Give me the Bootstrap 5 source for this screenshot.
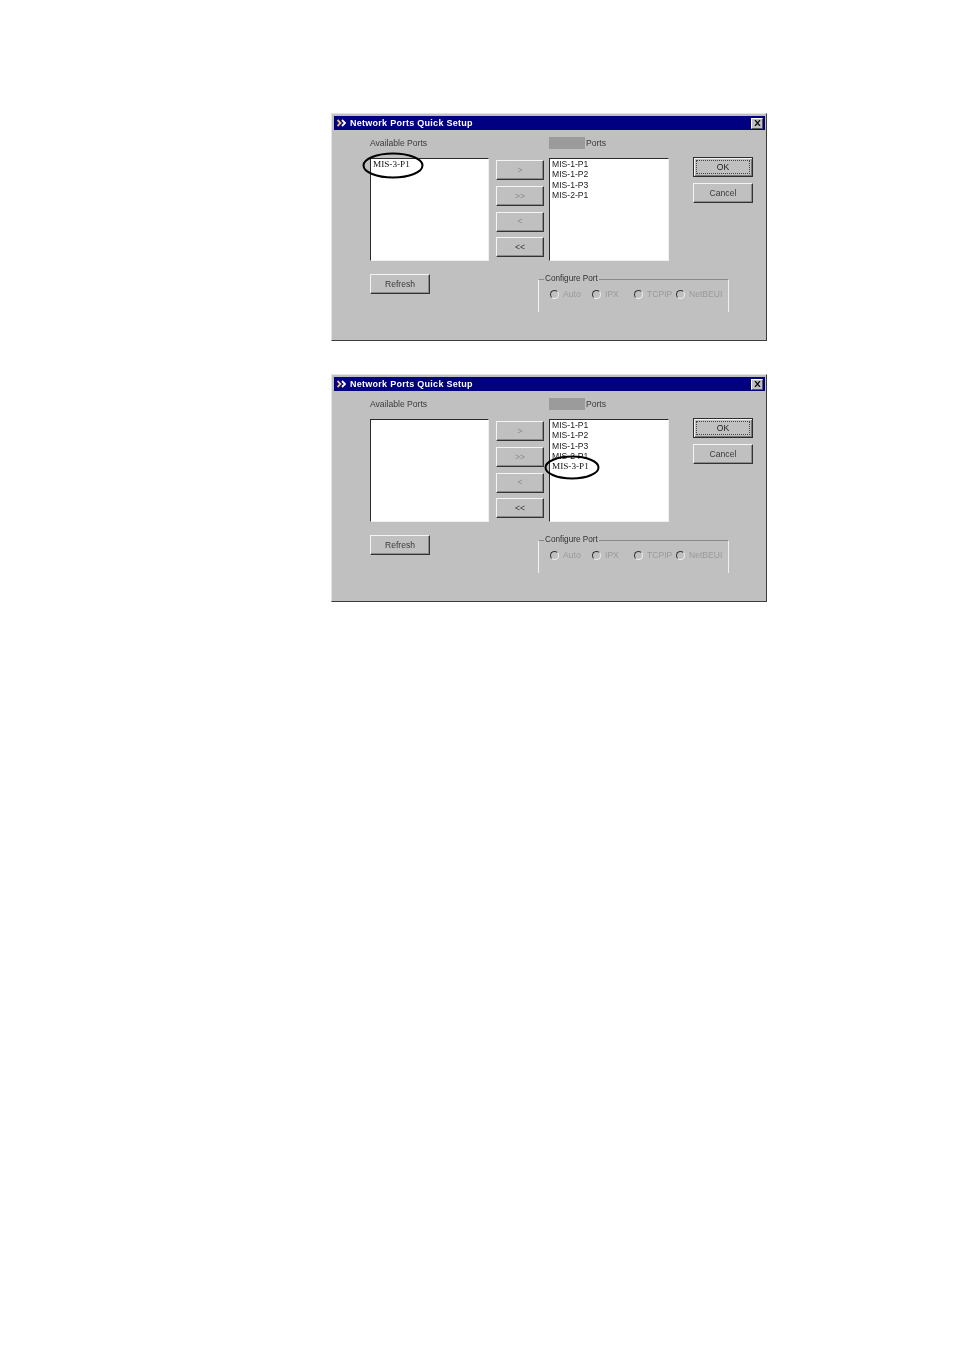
<!DOCTYPE html>
<html lang="en">
<head>
<meta charset="utf-8">
<title>Network Ports Quick Setup</title>
<link href="https://cdn.jsdelivr.net/npm/bootstrap@5.3.0/dist/css/bootstrap.min.css" rel="stylesheet">
<style>
body{background:#fff;font-family:"Liberation Sans",Arial,sans-serif;}
.sheet{padding:113px 0 0 331px;gap:33px;}
.dlg{position:relative;width:436px;height:228px;background:#c0c0c0;border:1px solid;border-color:#e4e4e4 #3c3c3c #3c3c3c #e4e4e4;padding:2px 1px 0 2px;font-size:8.6px;color:#3a3a3a;line-height:10.3px;filter:blur(.3px);}
.ttl{height:14px;background:#000080;color:#fff;font-weight:700;font-size:9px;letter-spacing:.27px;padding:0 2px 0 2px;}
.ttl-ico{width:13px;height:12px;margin-right:1px;}
.cls{width:12px;height:11px;background:#c0c0c0;border:1px solid;border-color:#fff #555 #555 #fff;}
.dlg-body{padding:7px 0 0 36px;}
.lbl-row{height:12px;margin-bottom:9px;}
.lbl-l{width:179px;}
.grey{width:36px;height:12px;background:#9b9b9b;margin-right:1px;}
.main-row{height:103px;}
.lbox{width:119px;height:103px;background:#fff;border:1px solid;border-color:#2a2a2a #f0f0f0 #f0f0f0 #2a2a2a;padding:0 0 0 2px;color:#222;}
.lbox.r{width:120px;}
.it-s{font-family:"Liberation Serif","Times New Roman",serif;font-size:9.2px;color:#111;}
.arrows{width:48px;margin:2px 5px 0 7px;gap:5.8px;}
.actions{width:60px;margin:-1px 0 0 24px;gap:6px;}
.wbtn{height:20px;width:100%;padding:0;border-radius:0;background:#c0c0c0;color:#3a3a3a;font-size:8.6px;line-height:1;border:1px solid;border-color:#f4f4f4 #333 #333 #f4f4f4;box-shadow:inset -1px -1px 0 #8a8a8a;}
.wbtn:hover{background:#c0c0c0;color:#3a3a3a;border-color:#f4f4f4 #333 #333 #f4f4f4;}
.wbtn.dim{color:#8c8c8c;}
.wbtn.def{border:1px solid #2c2c2c;box-shadow:inset 1px 1px 0 #f4f4f4,inset -1px -1px 0 #777;position:relative;color:#222;}
.wbtn.def::after{content:"";position:absolute;inset:2px;border:1px dotted #444;}
.low-row{margin-top:13px;}
.w60{width:60px;}
.grp{width:191px;height:38px;margin:0 0 0 108px;padding:0;border:1px solid;border-bottom:0;border-color:#f0f0f0 #f0f0f0 transparent #f0f0f0;border-top-color:#8a8a8a;border-left-color:#f4f4f4;min-width:0;}
.grp legend{float:none;width:auto;margin:0 0 0 5px;padding:0 1px;font-size:8.2px;line-height:10px;color:#333;}
.rad-row{margin:5px 0 0 11px;color:#999;}
.rad-c{width:42px;gap:4px;white-space:nowrap;}
.rad{width:9px;height:9px;flex:none;border-radius:50%;background:#c0c0c0;border:1px solid;border-color:#333 #eee #eee #333;}
.mark-o{position:absolute;pointer-events:none;}
.o1{left:30px;top:38px;width:62px;height:27px;}
.o2{left:212px;top:80px;width:56px;height:25px;}
</style>
</head>
<body>
<div class="sheet d-flex flex-column">

<section class="dlg">
  <div class="ttl d-flex align-items-center">
    <svg class="ttl-ico" viewBox="0 0 13 12"><path d="M1.5 3l3 3-3 3" fill="none" stroke="#f0c080" stroke-width="1.8"/><path d="M6 3l3 3-3 3" fill="none" stroke="#fff" stroke-width="1.8"/></svg>
    <span class="flex-grow-1">Network Ports Quick Setup</span>
    <span class="cls d-flex align-items-center justify-content-center"><svg width="7" height="6" viewBox="0 0 7 6"><path d="M1 0l5 6M6 0L1 6" stroke="#111" stroke-width="1.3"/></svg></span>
  </div>
  <div class="dlg-body">
    <div class="lbl-row d-flex align-items-center"><span class="lbl-l">Available Ports</span><span class="grey"></span><span>Ports</span></div>
    <div class="main-row d-flex">
      <div class="lbox"><div class="it-s">MIS-3-P1</div></div>
      <div class="arrows d-flex flex-column">
        <button class="btn wbtn dim">&gt;</button><button class="btn wbtn dim">&gt;&gt;</button><button class="btn wbtn dim">&lt;</button><button class="btn wbtn">&lt;&lt;</button>
      </div>
      <div class="lbox r"><div>MIS-1-P1</div><div>MIS-1-P2</div><div>MIS-1-P3</div><div>MIS-2-P1</div></div>
      <div class="actions d-flex flex-column">
        <button class="btn wbtn def">OK</button><button class="btn wbtn">Cancel</button>
      </div>
    </div>
    <div class="low-row d-flex align-items-start">
      <button class="btn wbtn w60">Refresh</button>
      <fieldset class="grp"><legend>Configure Port</legend>
        <div class="rad-row d-flex">
          <span class="rad-c d-flex align-items-center"><i class="rad"></i>Auto</span>
          <span class="rad-c d-flex align-items-center"><i class="rad"></i>IPX</span>
          <span class="rad-c d-flex align-items-center"><i class="rad"></i>TCPIP</span>
          <span class="rad-c d-flex align-items-center"><i class="rad"></i>NetBEUI</span>
        </div>
      </fieldset>
    </div>
  </div>
  <svg class="mark-o o1" viewBox="0 0 62 27"><ellipse cx="31" cy="13.5" rx="29.5" ry="12" fill="none" stroke="#000" stroke-width="2"/></svg>
</section>

<section class="dlg">
  <div class="ttl d-flex align-items-center">
    <svg class="ttl-ico" viewBox="0 0 13 12"><path d="M1.5 3l3 3-3 3" fill="none" stroke="#f0c080" stroke-width="1.8"/><path d="M6 3l3 3-3 3" fill="none" stroke="#fff" stroke-width="1.8"/></svg>
    <span class="flex-grow-1">Network Ports Quick Setup</span>
    <span class="cls d-flex align-items-center justify-content-center"><svg width="7" height="6" viewBox="0 0 7 6"><path d="M1 0l5 6M6 0L1 6" stroke="#111" stroke-width="1.3"/></svg></span>
  </div>
  <div class="dlg-body">
    <div class="lbl-row d-flex align-items-center"><span class="lbl-l">Available Ports</span><span class="grey"></span><span>Ports</span></div>
    <div class="main-row d-flex">
      <div class="lbox"></div>
      <div class="arrows d-flex flex-column">
        <button class="btn wbtn dim">&gt;</button><button class="btn wbtn dim">&gt;&gt;</button><button class="btn wbtn dim">&lt;</button><button class="btn wbtn">&lt;&lt;</button>
      </div>
      <div class="lbox r"><div>MIS-1-P1</div><div>MIS-1-P2</div><div>MIS-1-P3</div><div>MIS-2-P1</div><div class="it-s">MIS-3-P1</div></div>
      <div class="actions d-flex flex-column">
        <button class="btn wbtn def">OK</button><button class="btn wbtn">Cancel</button>
      </div>
    </div>
    <div class="low-row d-flex align-items-start">
      <button class="btn wbtn w60">Refresh</button>
      <fieldset class="grp"><legend>Configure Port</legend>
        <div class="rad-row d-flex">
          <span class="rad-c d-flex align-items-center"><i class="rad"></i>Auto</span>
          <span class="rad-c d-flex align-items-center"><i class="rad"></i>IPX</span>
          <span class="rad-c d-flex align-items-center"><i class="rad"></i>TCPIP</span>
          <span class="rad-c d-flex align-items-center"><i class="rad"></i>NetBEUI</span>
        </div>
      </fieldset>
    </div>
  </div>
  <svg class="mark-o o2" viewBox="0 0 56 25"><ellipse cx="28" cy="12.5" rx="26.5" ry="11" fill="none" stroke="#000" stroke-width="2"/></svg>
</section>

</div>
</body>
</html>
